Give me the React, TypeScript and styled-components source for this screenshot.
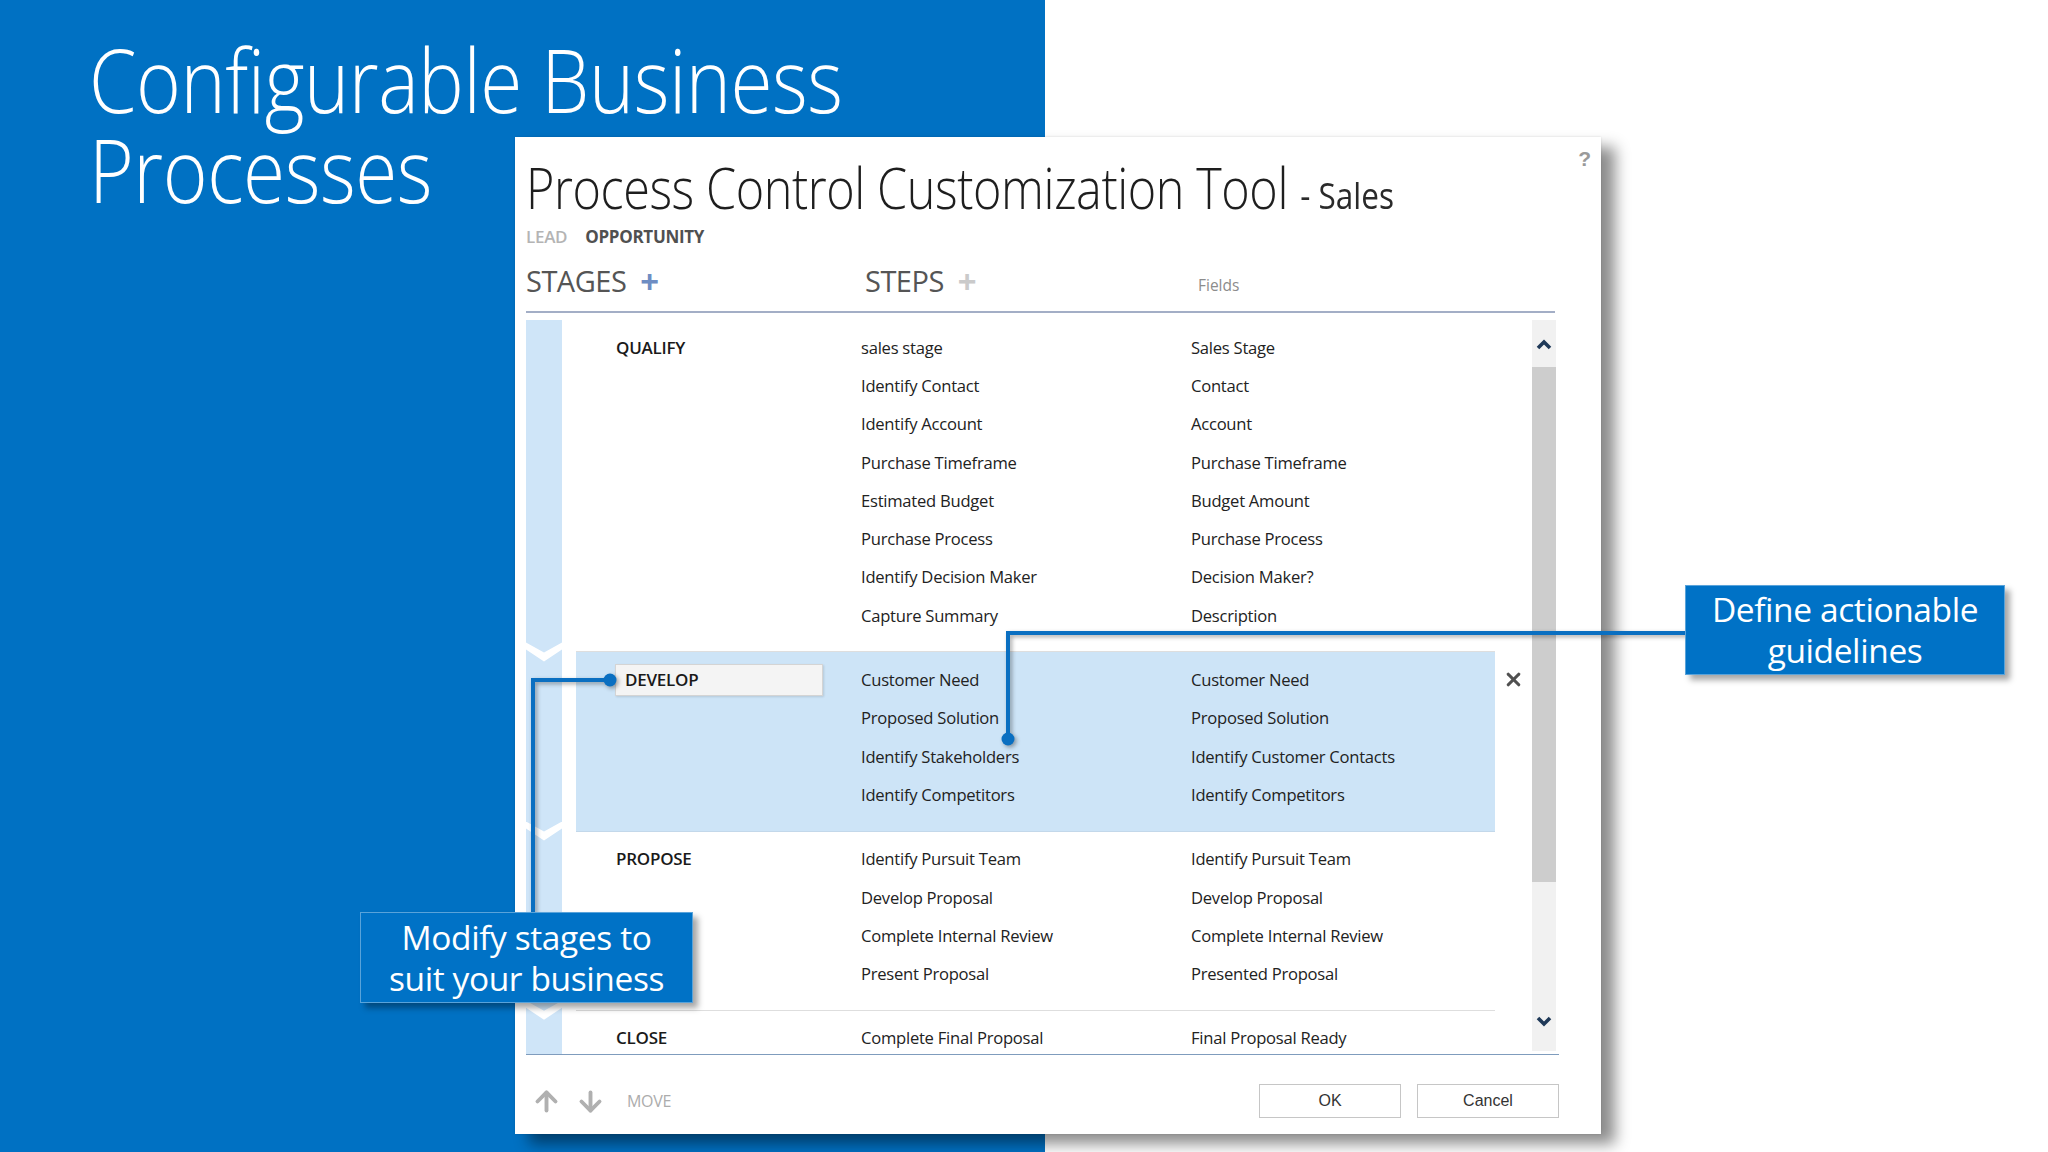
import React from "react";
import styled, { createGlobalStyle } from "styled-components";
import { ArrowUp, ArrowDown, X } from "lucide-react";

const GlobalStyle = createGlobalStyle`
  html, body { margin: 0; padding: 0; background: #ffffff; }
  body { font-family: "Open Sans", "Noto Sans", sans-serif; }
  * { box-sizing: border-box; }
`;

const Slide = styled.div`
  position: relative;
  width: 2048px;
  height: 1152px;
  overflow: hidden;
  display: grid;
  grid-template-columns: 1045px 1fr;
`;

const BluePanel = styled.section`
  background: #0071c3;
  padding: 34px 0 0 89px;
`;

const WhitePanel = styled.section`
  background: #ffffff;
`;

/* Segoe UI Light is narrower than Open Sans Light: condense horizontally */
const Heading = styled.h1`
  margin: 0;
  font-family: "Open Sans", sans-serif;
  font-weight: 300;
  font-size: 89px;
  line-height: 90px;
  letter-spacing: -0.5px;
  color: #ffffff;
  white-space: nowrap;
  transform: scaleX(0.86);
  transform-origin: left top;
`;

const Dialog = styled.div`
  position: absolute;
  left: 515px;
  top: 137px;
  width: 1086px;
  height: 997px;
  background: #ffffff;
  box-shadow: 14px 10px 14px rgba(0, 0, 0, 0.45), 0 0 2px rgba(0, 0, 0, 0.12);
  padding: 15px 42px 0 11px;
  display: flex;
  flex-direction: column;
  z-index: 1;
`;

const Help = styled.span`
  position: absolute;
  right: 10px;
  top: 10px;
  font-family: "Liberation Sans", sans-serif;
  font-weight: 700;
  font-size: 21px;
  color: #9a9a9a;
`;

const Title = styled.h2`
  margin: 0;
  font-weight: 300;
  font-size: 57px;
  line-height: 70px;
  letter-spacing: -0.5px;
  color: #1e1e1e;
  white-space: nowrap;
  transform: scaleX(0.852);
  transform-origin: left top;
`;

const TitleSub = styled.span`
  font-size: 37px;
  font-weight: 400;
  letter-spacing: 0;
  color: #2a2a2a;
`;

const Tabs = styled.div`
  display: flex;
  gap: 18px;
  margin-top: -4px;
  height: 20px;
  align-items: center;
`;

const Tab = styled.span<{ $active?: boolean }>`
  font-size: 17px;
  font-weight: ${(p) => (p.$active ? 700 : 600)};
  letter-spacing: -0.3px;
  color: ${(p) => (p.$active ? "#505050" : "#b4b4b4")};
`;

const ColumnHeader = styled.div`
  display: grid;
  grid-template-columns: 339px 333px 1fr;
  align-items: center;
  margin-top: 17px;
  padding-bottom: 12px;
  border-bottom: 2px solid #a3aec6;
  width: 1029px;
`;

const HeaderLabel = styled.span`
  font-size: 29px;
  line-height: 36px;
  font-weight: 400;
  letter-spacing: -0.5px;
  color: #555555;
  display: flex;
  align-items: center;
  gap: 14px;
`;

const Plus = styled.span<{ $enabled?: boolean }>`
  font-family: "Liberation Sans", sans-serif;
  font-size: 32px;
  font-weight: 700;
  color: ${(p) => (p.$enabled ? "#6e8dc3" : "#cacaca")};
`;

const FieldsLabel = styled.span`
  font-size: 15.5px;
  color: #8c8c8c;
  padding-top: 8px;
`;

const Body = styled.div`
  display: flex;
  height: 735px;
  margin-top: 7px;
  border-bottom: 1px solid #7f9cbd;
  overflow: hidden;
`;

const List = styled.div`
  flex: 0 0 1006px;
  display: flex;
  flex-direction: column;
`;

const Section = styled.div`
  display: flex;
  flex: none;
`;

const Stripe = styled.div<{ $notch?: boolean }>`
  width: 36px;
  flex: none;
  background: #cfe5f8;
  position: relative;
  &::before {
    content: "";
    display: ${(p) => (p.$notch ? "block" : "none")};
    position: absolute;
    left: 0;
    top: -10px;
    width: 36px;
    height: 20px;
    background: #ffffff;
    clip-path: polygon(0 0, 50% 10px, 100% 0, 100% 7px, 50% 19px, 0 7px);
  }
`;

const Content = styled.div<{ $selected?: boolean }>`
  margin-left: 14px;
  width: 919px;
  display: grid;
  grid-template-columns: 245px 330px 1fr;
  grid-auto-rows: 38.3px;
  padding: 8px 0 17px 40px;
  background: ${(p) => (p.$selected ? "#cde4f7" : "transparent")};
  border-bottom: 1px solid ${(p) => (p.$selected ? "#c3d8ea" : "#dedede")};
`;

const Cell = styled.div`
  display: flex;
  align-items: center;
  font-size: 16.6px;
  letter-spacing: -0.25px;
  color: #222222;
  white-space: nowrap;
`;

const StageName = styled(Cell)`
  font-weight: 600;
  font-size: 17px;
  color: #1a1a1a;
`;

const StageInput = styled.div`
  margin-left: -1px;
  width: 208px;
  height: 32px;
  padding: 0 9px;
  display: flex;
  align-items: center;
  background: #f4f4f4;
  border: 1px solid #d4d4d4;
  box-shadow: 1px 1px 2px rgba(0, 0, 0, 0.12);
`;

const Aside = styled.div`
  width: 37px;
  flex: none;
  padding-top: 8px;
`;

const RemoveButton = styled.div`
  height: 38px;
  display: flex;
  align-items: center;
  justify-content: center;
  color: #505050;
`;

const Scrollbar = styled.div`
  width: 24px;
  margin-right: 3px;
  height: 731px;
  background: #f1f1f1;
  display: flex;
  flex-direction: column;
`;

const ScrollButton = styled.div<{ $h: number }>`
  height: ${(p) => p.$h}px;
  display: flex;
  align-items: center;
  justify-content: center;
`;

const ScrollThumb = styled.div`
  height: 515px;
  background: #cdcdcd;
`;

const ScrollGap = styled.div`
  flex: 1;
`;

const Footer = styled.div`
  display: flex;
  align-items: center;
  justify-content: space-between;
  margin-top: 29px;
  height: 34px;
`;

const MoveGroup = styled.div`
  display: flex;
  align-items: center;
  padding-left: 5px;
  gap: 13px;
  color: #b0b0b0;
`;

const MoveLabel = styled.span`
  margin-left: 8px;
  font-size: 16px;
  color: #acacac;
  letter-spacing: -0.3px;
`;

const ButtonRow = styled.div`
  display: flex;
  gap: 16px;
`;

const Button = styled.button`
  width: 142px;
  height: 34px;
  background: #ffffff;
  border: 1px solid #c6c6c6;
  font-family: "Liberation Sans", Arial, sans-serif;
  font-size: 16px;
  color: #333333;
  padding: 0;
`;

const Connectors = styled.svg`
  position: absolute;
  left: 0;
  top: 0;
  width: 2048px;
  height: 1152px;
  pointer-events: none;
  z-index: 2;
  filter: drop-shadow(2px 2px 2px rgba(0, 0, 0, 0.35));
`;

const Callout = styled.div<{ $left: number; $top: number; $w: number; $h: number }>`
  position: absolute;
  left: ${(p) => p.$left}px;
  top: ${(p) => p.$top}px;
  width: ${(p) => p.$w}px;
  height: ${(p) => p.$h}px;
  z-index: 3;
  background: #0072c6;
  border: 1px solid rgba(255, 255, 255, 0.35);
  box-shadow: 5px 5px 6px rgba(0, 0, 0, 0.35);
  color: #ffffff;
  font-size: 33.5px;
  line-height: 41px;
  letter-spacing: -0.4px;
  text-align: center;
  display: flex;
  align-items: center;
  justify-content: center;
`;

type Stage = { name: string; rows: [string, string][]; selected?: boolean };

const stages: Stage[] = [
  {
    name: "QUALIFY",
    rows: [
      ["sales stage", "Sales Stage"],
      ["Identify Contact", "Contact"],
      ["Identify Account", "Account"],
      ["Purchase Timeframe", "Purchase Timeframe"],
      ["Estimated Budget", "Budget Amount"],
      ["Purchase Process", "Purchase Process"],
      ["Identify Decision Maker", "Decision Maker?"],
      ["Capture Summary", "Description"],
    ],
  },
  {
    name: "DEVELOP",
    selected: true,
    rows: [
      ["Customer Need", "Customer Need"],
      ["Proposed Solution", "Proposed Solution"],
      ["Identify Stakeholders", "Identify Customer Contacts"],
      ["Identify Competitors", "Identify Competitors"],
    ],
  },
  {
    name: "PROPOSE",
    rows: [
      ["Identify Pursuit Team", "Identify Pursuit Team"],
      ["Develop Proposal", "Develop Proposal"],
      ["Complete Internal Review", "Complete Internal Review"],
      ["Present Proposal", "Presented Proposal"],
    ],
  },
  {
    name: "CLOSE",
    rows: [["Complete Final Proposal", "Final Proposal Ready"]],
  },
];

const Caret = ({ up }: { up?: boolean }) => (
  <svg width="16" height="12" viewBox="0 0 16 12">
    <path
      d={up ? "M2 10 L8 4 L14 10" : "M2 2 L8 8 L14 2"}
      fill="none"
      stroke="#1f3958"
      strokeWidth="3.6"
    />
  </svg>
);

export default function App() {
  return (
    <>
      <GlobalStyle />
      <Slide>
        <BluePanel>
          <Heading>
            Configurable Business
            <br />
            Processes
          </Heading>
        </BluePanel>
        <WhitePanel />

        <Dialog>
          <Help>?</Help>
          <Title>
            Process Control Customization Tool <TitleSub>- Sales</TitleSub>
          </Title>
          <Tabs>
            <Tab>LEAD</Tab>
            <Tab $active>OPPORTUNITY</Tab>
          </Tabs>
          <ColumnHeader>
            <HeaderLabel>
              STAGES <Plus $enabled>+</Plus>
            </HeaderLabel>
            <HeaderLabel>
              STEPS <Plus>+</Plus>
            </HeaderLabel>
            <FieldsLabel>Fields</FieldsLabel>
          </ColumnHeader>

          <Body>
            <List>
              {stages.map((s, si) => (
                <Section key={s.name}>
                  <Stripe $notch={si > 0} />
                  <Content $selected={s.selected}>
                    {s.rows.map(([step, field], i) => (
                      <React.Fragment key={step}>
                        {i === 0 ? (
                          <StageName>
                            {s.selected ? <StageInput>{s.name}</StageInput> : s.name}
                          </StageName>
                        ) : (
                          <Cell />
                        )}
                        <Cell>{step}</Cell>
                        <Cell>{field}</Cell>
                      </React.Fragment>
                    ))}
                  </Content>
                  <Aside>
                    {s.selected && (
                      <RemoveButton>
                        <X size={21} strokeWidth={3.6} />
                      </RemoveButton>
                    )}
                  </Aside>
                </Section>
              ))}
            </List>
            <Scrollbar>
              <ScrollButton $h={47}>
                <Caret up />
              </ScrollButton>
              <ScrollThumb />
              <ScrollGap />
              <ScrollButton $h={58}>
                <Caret />
              </ScrollButton>
            </Scrollbar>
          </Body>

          <Footer>
            <MoveGroup>
              <ArrowUp size={31} strokeWidth={3} />
              <ArrowDown size={31} strokeWidth={3} />
              <MoveLabel>MOVE</MoveLabel>
            </MoveGroup>
            <ButtonRow>
              <Button>OK</Button>
              <Button>Cancel</Button>
            </ButtonRow>
          </Footer>
        </Dialog>

        <Connectors viewBox="0 0 2048 1152">
          <path d="M1686 633 H1008 V739" fill="none" stroke="#0a6fc1" strokeWidth="4" />
          <circle cx="1008" cy="739" r="6.5" fill="#0a6fc1" />
          <path d="M610 680 H533 V912" fill="none" stroke="#0a6fc1" strokeWidth="4" />
          <circle cx="610" cy="680" r="6.5" fill="#0a6fc1" />
        </Connectors>

        <Callout $left={1685} $top={585} $w={320} $h={90}>
          Define actionable
          <br />
          guidelines
        </Callout>
        <Callout $left={360} $top={912} $w={333} $h={91}>
          Modify stages to
          <br />
          suit your business
        </Callout>
      </Slide>
    </>
  );
}
